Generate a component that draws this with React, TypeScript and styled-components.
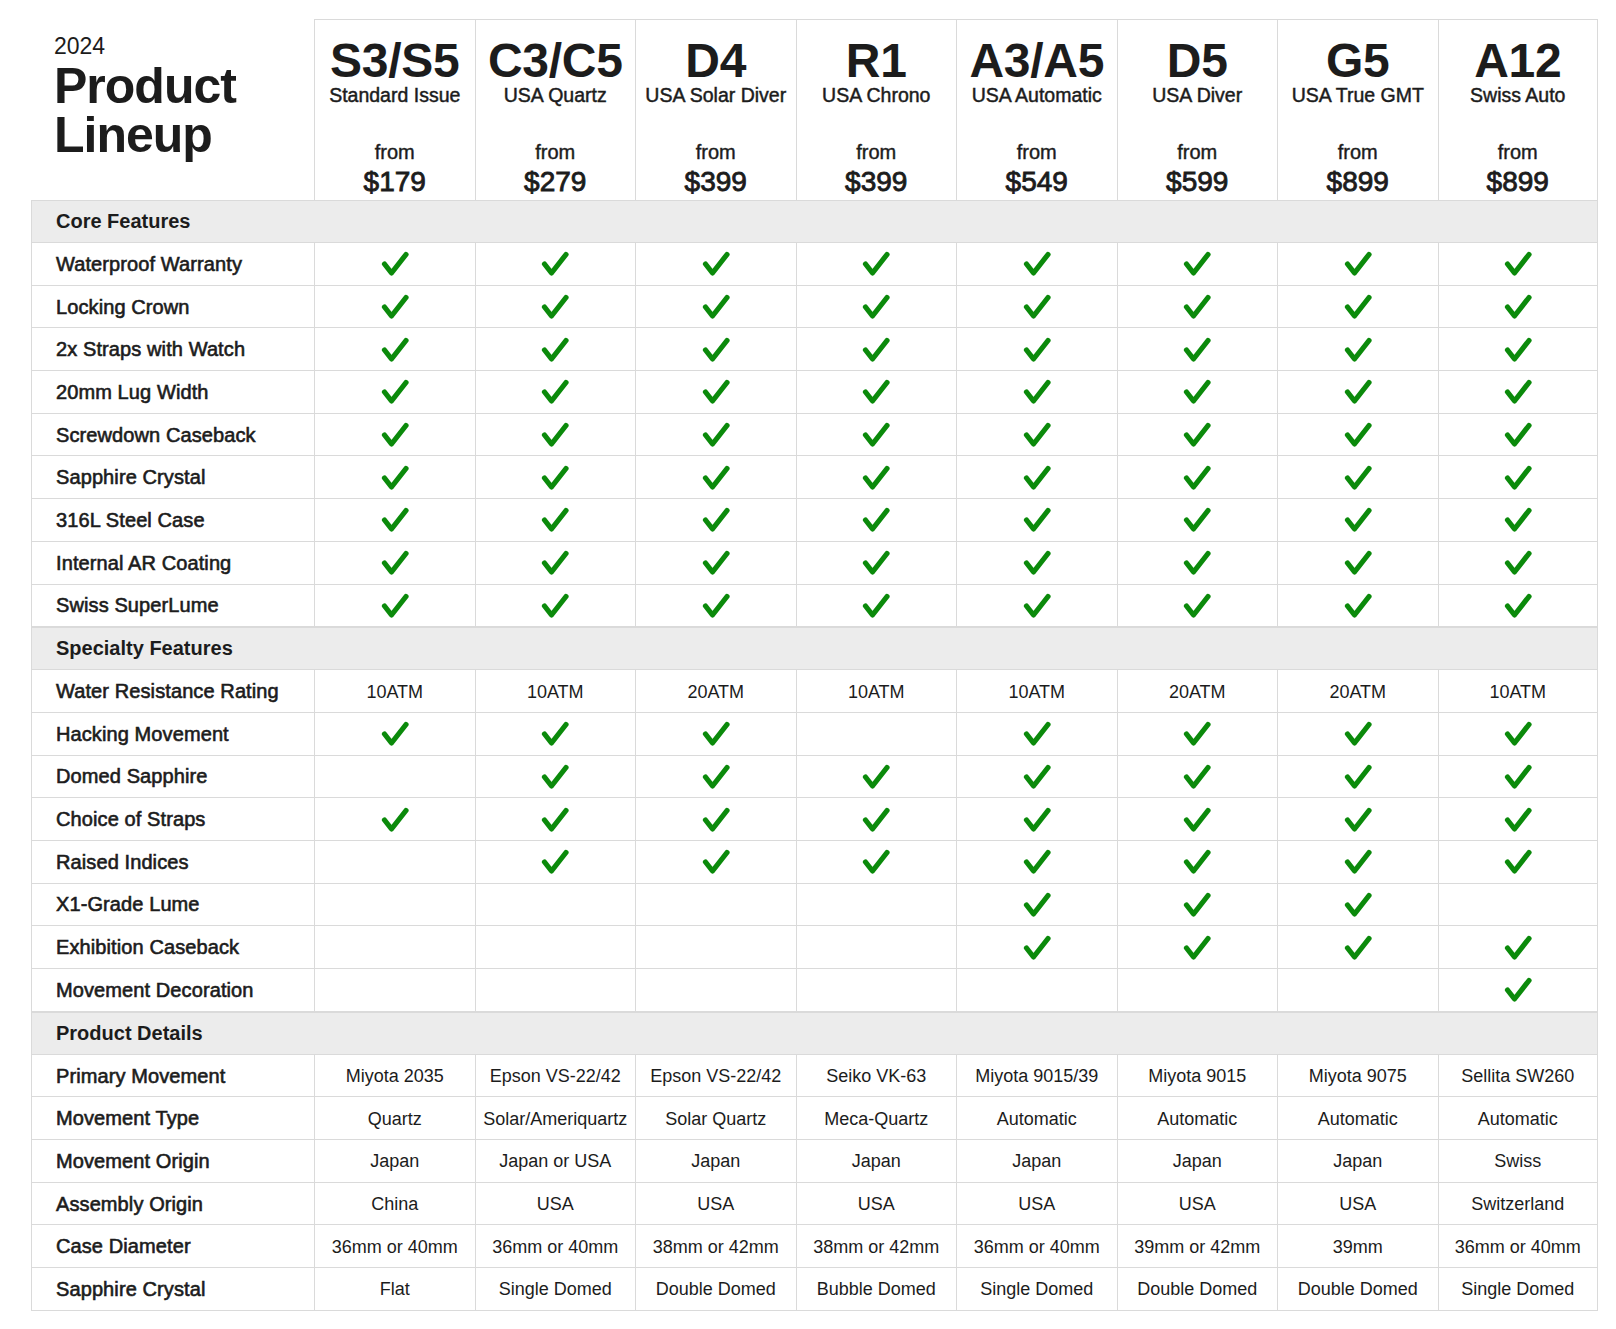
import React from 'react';
import styled, { createGlobalStyle } from 'styled-components';

const LINE = '#dadada';
const COLS = '283px repeat(8, 1fr)';

const GlobalStyle = createGlobalStyle`
  html, body { margin: 0; padding: 0; background: #fff; }
  body {
    font-family: "Liberation Sans", Arial, Helvetica, sans-serif;
    color: #1c1c1c;
  }
  * { box-sizing: border-box; }
`;

const Page = styled.div`
  padding: 19px 0 20px 31px;
`;

const Table = styled.div`
  width: 1567px;
`;

const HeaderRow = styled.div`
  display: grid;
  grid-template-columns: ${COLS};
  height: 181px;
`;

const TitleCell = styled.div`
  padding: 15.5px 0 0 23px;
`;

const Year = styled.div`
  font-size: 23px;
  line-height: 23px;
`;

const Title = styled.h1`
  margin: 4.7px 0 0;
  font-size: 50px;
  line-height: 49px;
  font-weight: 700;
  letter-spacing: -1px;
`;

const TitleLine = styled.span`
  display: block;
`;

const ModelCell = styled.div<{ $last?: boolean }>`
  border-top: 1px solid ${LINE};
  border-left: 1px solid ${LINE};
  border-right: ${(p) => (p.$last ? `1px solid ${LINE}` : 'none')};
  display: flex;
  flex-direction: column;
  align-items: center;
  padding-top: 19.4px;
`;

const ModelName = styled.div`
  font-size: 48px;
  line-height: 44px;
  font-weight: 700;
  letter-spacing: -0.3px;
`;

const ModelSub = styled.div`
  margin-top: 2px;
  font-size: 19.5px;
  line-height: 20px;
  white-space: nowrap;
  -webkit-text-stroke: 0.45px #1c1c1c;
`;

const From = styled.div`
  margin-top: 36.6px;
  font-size: 20px;
  line-height: 20px;
  -webkit-text-stroke: 0.4px #1c1c1c;
`;

const Price = styled.div`
  margin-top: 5.3px;
  font-size: 28px;
  line-height: 30px;
  -webkit-text-stroke: 0.85px #1c1c1c;
`;

const Band = styled.div`
  height: 43px;
  background: #ececec;
  border: 1px solid ${LINE};
  display: flex;
  align-items: center;
  padding-left: 24px;
  font-size: 20px;
  font-weight: 700;
`;

const Row = styled.div`
  display: grid;
  grid-template-columns: ${COLS};
  height: 42.7px;
  border-bottom: 1px solid ${LINE};
`;

const Label = styled.div`
  border-left: 1px solid ${LINE};
  display: flex;
  align-items: center;
  padding-left: 24px;
  padding-top: 1px;
  font-size: 20px;
  letter-spacing: 0.1px;
  -webkit-text-stroke: 0.6px #1c1c1c;
  white-space: nowrap;
`;

const Cell = styled.div<{ $last?: boolean }>`
  border-left: 1px solid ${LINE};
  border-right: ${(p) => (p.$last ? `1px solid ${LINE}` : 'none')};
  display: flex;
  align-items: center;
  justify-content: center;
  font-size: 18px;
  padding-top: 2px;
  white-space: nowrap;
`;

const CheckSvg = styled.svg`
  width: 30px;
  height: 28px;
  display: block;
  margin-top: -1px;
`;

const Check = () => (
  <CheckSvg viewBox="0 0 30 28">
    <polyline
      points="4.5,14 11.5,23 26,4.5"
      fill="none"
      stroke="#0b8a0b"
      strokeWidth="5.2"
      strokeLinecap="round"
      strokeLinejoin="round"
    />
  </CheckSvg>
);

const models = [
  { name: 'S3/S5', sub: 'Standard Issue', price: '$179' },
  { name: 'C3/C5', sub: 'USA Quartz', price: '$279' },
  { name: 'D4', sub: 'USA Solar Diver', price: '$399' },
  { name: 'R1', sub: 'USA Chrono', price: '$399' },
  { name: 'A3/A5', sub: 'USA Automatic', price: '$549' },
  { name: 'D5', sub: 'USA Diver', price: '$599' },
  { name: 'G5', sub: 'USA True GMT', price: '$899' },
  { name: 'A12', sub: 'Swiss Auto', price: '$899' },
];

type RowData = { label: string; values: (boolean | string)[] };
type Section = { title: string; rows: RowData[] };

const all = Array(8).fill(true);
const pick = (s: string) => s.split('').map((c) => c === '1');

const sections: Section[] = [
  {
    title: 'Core Features',
    rows: [
      'Waterproof Warranty',
      'Locking Crown',
      '2x Straps with Watch',
      '20mm Lug Width',
      'Screwdown Caseback',
      'Sapphire Crystal',
      '316L Steel Case',
      'Internal AR Coating',
      'Swiss SuperLume',
    ].map((label) => ({ label, values: all })),
  },
  {
    title: 'Specialty Features',
    rows: [
      {
        label: 'Water Resistance Rating',
        values: ['10ATM', '10ATM', '20ATM', '10ATM', '10ATM', '20ATM', '20ATM', '10ATM'],
      },
      { label: 'Hacking Movement', values: pick('11101111') },
      { label: 'Domed Sapphire', values: pick('01111111') },
      { label: 'Choice of Straps', values: pick('11111111') },
      { label: 'Raised Indices', values: pick('01111111') },
      { label: 'X1-Grade Lume', values: pick('00001110') },
      { label: 'Exhibition Caseback', values: pick('00001111') },
      { label: 'Movement Decoration', values: pick('00000001') },
    ],
  },
  {
    title: 'Product Details',
    rows: [
      {
        label: 'Primary Movement',
        values: ['Miyota 2035', 'Epson VS-22/42', 'Epson VS-22/42', 'Seiko VK-63', 'Miyota 9015/39', 'Miyota 9015', 'Miyota 9075', 'Sellita SW260'],
      },
      {
        label: 'Movement Type',
        values: ['Quartz', 'Solar/Ameriquartz', 'Solar Quartz', 'Meca-Quartz', 'Automatic', 'Automatic', 'Automatic', 'Automatic'],
      },
      {
        label: 'Movement Origin',
        values: ['Japan', 'Japan or USA', 'Japan', 'Japan', 'Japan', 'Japan', 'Japan', 'Swiss'],
      },
      {
        label: 'Assembly Origin',
        values: ['China', 'USA', 'USA', 'USA', 'USA', 'USA', 'USA', 'Switzerland'],
      },
      {
        label: 'Case Diameter',
        values: ['36mm or 40mm', '36mm or 40mm', '38mm or 42mm', '38mm or 42mm', '36mm or 40mm', '39mm or 42mm', '39mm', '36mm or 40mm'],
      },
      {
        label: 'Sapphire Crystal',
        values: ['Flat', 'Single Domed', 'Double Domed', 'Bubble Domed', 'Single Domed', 'Double Domed', 'Double Domed', 'Single Domed'],
      },
    ],
  },
];

export default function App() {
  return (
    <>
      <GlobalStyle />
      <Page>
        <Table>
          <HeaderRow>
            <TitleCell>
              <Year>2024</Year>
              <Title>
                <TitleLine>Product</TitleLine>
                <TitleLine>Lineup</TitleLine>
              </Title>
            </TitleCell>
            {models.map((m, i) => (
              <ModelCell key={m.name} $last={i === models.length - 1}>
                <ModelName>{m.name}</ModelName>
                <ModelSub>{m.sub}</ModelSub>
                <From>from</From>
                <Price>{m.price}</Price>
              </ModelCell>
            ))}
          </HeaderRow>
          {sections.map((s) => (
            <React.Fragment key={s.title}>
              <Band>{s.title}</Band>
              {s.rows.map((r) => (
                <Row key={r.label}>
                  <Label>{r.label}</Label>
                  {r.values.map((v, i) => (
                    <Cell key={i} $last={i === 7}>
                      {typeof v === 'string' ? v : v ? <Check /> : null}
                    </Cell>
                  ))}
                </Row>
              ))}
            </React.Fragment>
          ))}
        </Table>
      </Page>
    </>
  );
}
